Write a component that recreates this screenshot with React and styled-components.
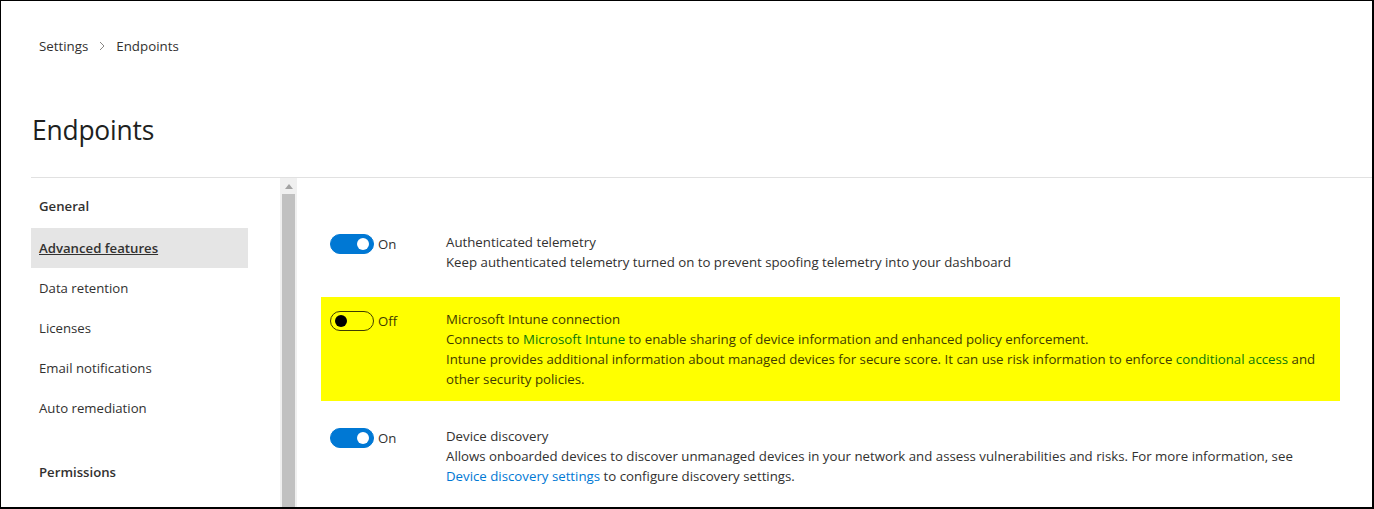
import React from "react";
import styled, { createGlobalStyle } from "styled-components";

const GlobalStyle = createGlobalStyle`
  html, body {
    margin: 0;
    padding: 0;
    background: #fff;
  }
  body {
    font-family: "Open Sans", "Noto Sans", sans-serif;
    color: #323130;
  }
`;

const Frame = styled.div`
  box-sizing: border-box;
  width: 1374px;
  height: 509px;
  border: 1px solid #000;
  border-right-width: 2px;
  border-bottom-width: 2px;
  overflow: hidden;
  display: flex;
  flex-direction: column;
`;

const Breadcrumb = styled.nav`
  display: flex;
  align-items: center;
  gap: 9px;
  padding: 35px 0 0 38px;
  font-size: 13.3px;
  line-height: 20px;
  color: #323130;
`;

const Crumb = styled.span``;

const Title = styled.h1`
  margin: 56px 0 0 31px;
  font-size: 26.4px;
  font-weight: 400;
  line-height: 36px;
  letter-spacing: -0.2px;
  color: #201f1e;
`;

const Divider = styled.div`
  margin: 29px 0 0 30px;
  height: 1px;
  background: #e1e1e1;
`;

const Body = styled.div`
  flex: 1;
  display: flex;
  min-height: 0;
`;

const SideNav = styled.ul`
  list-style: none;
  margin: 0 0 0 30px;
  padding: 18px 0 0;
  width: 217px;
  font-size: 13.2px;
`;

const GroupHeader = styled.li`
  padding-left: 8px;
  line-height: 20px;
  font-weight: 600;
  margin-top: ${p => p.$top || 0}px;
  margin-bottom: 12px;
`;

const NavItem = styled.li`
  height: 40px;
  display: flex;
  align-items: center;
  padding-left: 8px;
  background: ${p => (p.$active ? "#e5e5e5" : "transparent")};
  font-weight: ${p => (p.$active ? 600 : 400)};
  text-decoration: ${p => (p.$active ? "underline" : "none")};
`;

const Scrollbar = styled.div`
  margin-left: 32px;
  width: 17px;
  background: #f0f0f0;
  display: flex;
  flex-direction: column;
  align-items: center;
`;

const ScrollArrow = styled.div`
  height: 16px;
  display: flex;
  align-items: center;
  justify-content: center;
`;

const ScrollThumb = styled.div`
  flex: 1;
  width: 13px;
  background: #c1c1c1;
`;

const Content = styled.div`
  flex: 1;
  padding: 42px 32px 0 24px;
  display: flex;
  flex-direction: column;
  gap: 13px;
`;

const SettingRow = styled.div`
  display: flex;
  padding: 12px 9px;
  background: ${p => (p.$highlight ? "#ffff00" : "transparent")};
  color: ${p => (p.$highlight ? "#3f3c00" : "#323130")};
`;

const ToggleCell = styled.div`
  width: 116px;
  flex-shrink: 0;
  display: flex;
  align-items: center;
  align-self: flex-start;
  gap: 4px;
  padding-top: 2px;
  font-size: 13.2px;
`;

const Track = styled.span`
  box-sizing: border-box;
  width: 44px;
  height: 20px;
  border-radius: 10px;
  display: flex;
  align-items: center;
  padding: 0 4px;
  justify-content: ${p => (p.$on ? "flex-end" : "flex-start")};
  background: ${p => (p.$on ? "#0078d4" : "transparent")};
  border: 1px solid ${p => (p.$on ? "#0078d4" : "#3f3c00")};
`;

const Knob = styled.span`
  width: 12px;
  height: 12px;
  border-radius: 50%;
  background: ${p => (p.$on ? "#fff" : "#000")};
`;

const Details = styled.div`
  font-size: 13.25px;
  line-height: 20px;
`;

const Link = styled.a`
  color: ${p => (p.$highlight ? "#0a780a" : "#0078d4")};
  text-decoration: none;
`;

const Toggle = ({ on }) => (
  <ToggleCell>
    <Track $on={on}>
      <Knob $on={on} />
    </Track>
    {on ? "On" : "Off"}
  </ToggleCell>
);

const Chevron = () => (
  <svg width="10" height="10" viewBox="0 0 10 10">
    <path d="M3 1 L7 5 L3 9" fill="none" stroke="#8a8886" strokeWidth="1" />
  </svg>
);

const ArrowUp = () => (
  <svg width="8" height="5" viewBox="0 0 8 5">
    <path d="M0 5 L4 0 L8 5 Z" fill="#a3a3a3" />
  </svg>
);

export default function App() {
  return (
    <>
      <GlobalStyle />
      <Frame>
        <Breadcrumb>
          <Crumb>Settings</Crumb>
          <Chevron />
          <Crumb>Endpoints</Crumb>
        </Breadcrumb>
        <Title>Endpoints</Title>
        <Divider />
        <Body>
          <SideNav>
            <GroupHeader>General</GroupHeader>
            <NavItem $active>Advanced features</NavItem>
            <NavItem>Data retention</NavItem>
            <NavItem>Licenses</NavItem>
            <NavItem>Email notifications</NavItem>
            <NavItem>Auto remediation</NavItem>
            <GroupHeader $top={34}>Permissions</GroupHeader>
          </SideNav>
          <Scrollbar>
            <ScrollArrow>
              <ArrowUp />
            </ScrollArrow>
            <ScrollThumb />
          </Scrollbar>
          <Content>
            <SettingRow>
              <Toggle on />
              <Details>
                Authenticated telemetry
                <br />
                Keep authenticated telemetry turned on to prevent spoofing telemetry into your dashboard
              </Details>
            </SettingRow>
            <SettingRow $highlight>
              <Toggle on={false} />
              <Details>
                Microsoft Intune connection
                <br />
                Connects to <Link $highlight>Microsoft Intune</Link> to enable sharing of device information and enhanced policy enforcement.
                <br />
                Intune provides additional information about managed devices for secure score. It can use risk information to enforce{" "}
                <Link $highlight>conditional access</Link> and
                <br />
                other security policies.
              </Details>
            </SettingRow>
            <SettingRow>
              <Toggle on />
              <Details>
                Device discovery
                <br />
                Allows onboarded devices to discover unmanaged devices in your network and assess vulnerabilities and risks. For more information, see
                <br />
                <Link>Device discovery settings</Link> to configure discovery settings.
              </Details>
            </SettingRow>
          </Content>
        </Body>
      </Frame>
    </>
  );
}
